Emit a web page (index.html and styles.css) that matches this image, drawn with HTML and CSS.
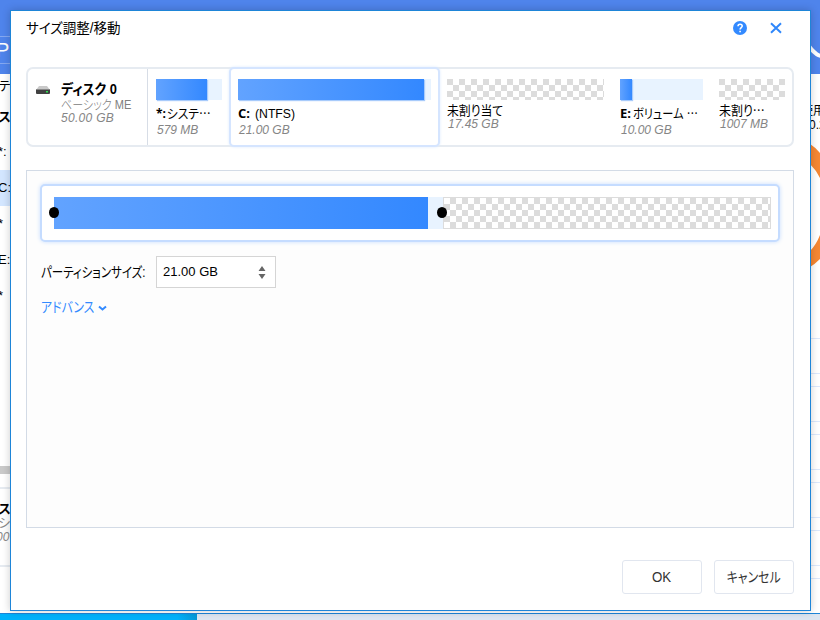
FILE: index.html
```html
<!DOCTYPE html>
<html lang="ja">
<head>
<meta charset="utf-8">
<title>サイズ調整/移動</title>
<link rel="stylesheet" href="styles.css">
</head>
<body>
<div class="app">
  <div class="app-body">
    <div class="side">
      <div class="side-head">P</div>
      <div class="row row-title">テ</div>
      <div class="row row-disk">ス</div>
      <div class="row">*:</div>
      <div class="row active">C:</div>
      <div class="row">*</div>
      <div class="row">E:</div>
      <div class="row">*</div>
      <div class="scroll"></div>
      <div class="side-card"><b>ス</b><span>シ</span><i>00</i></div>
    </div>
    <svg class="chart" width="10" height="613" viewBox="810 0 10 613">
      <path fill="#4f84eb" d="M810 0h10v74h-10z"/>
      <path d="M808 45q8 11 14 11" fill="none" stroke="#fff" stroke-width="4"/>
      <text x="801" y="115" class="chart-text">使用</text>
      <text x="809" y="129" class="chart-text">0.2</text>
      <path fill="#f58733" d="M810 144q5 3 10 9v25q-4-8-10-14zM810 251q6-6 10-16v24q-5 5-10 8z"/>
      <path stroke="#dbe8fc" d="M810 338.500h10M810 373.500h10M810 386.500h10M810 421.500h10M810 434.500h10M810 469.500h10M810 482.500h10M810 517.500h10M810 530.500h10M810 565.500h10M810 578.500h10"/>
    </svg>
  </div>
  <div class="taskbar"><div class="taskbar-on"></div></div>
</div>

<div class="dialog">
  <header class="head">
    <h1><span class="t-title">サイズ調整/移動</span></h1>
    <svg class="help" width="14" height="14" viewBox="0 0 14 14"><circle cx="7" cy="7" r="7" fill="#338aff"/><path d="M5 5.300C5 2.500 9.200 2.600 9.200 5.100 9.200 6.700 7.100 6.600 7.100 8.500M7.100 9.700v1.500" fill="none" stroke="#fff" stroke-width="1.600"/></svg>
    <svg class="close" width="12" height="12" viewBox="0 0 12 12"><path d="M1 1.300l10 9.400M11 1.300L1 10.700" stroke="#2f87fb" stroke-width="2"/></svg>
  </header>

  <section class="disk">
    <div class="disk-info">
      <svg width="14" height="9" viewBox="0 0 14 9"><path d="M3 0h8l3 4H0z" fill="#c9c9c9"/><path d="M0 3.500h14V7q0 1-1 1H1Q0 8 0 7z" fill="#414141"/><path d="M0 3.500h14" stroke="#888"/><path d="M10 5h2v1.500h-2z" fill="#31e052"/></svg>
      <div class="disk-text">
        <b><span class="t-disk">ディスク 0</span></b>
        <span class="kind"><span class="t-kind">ベーシック ME</span></span>
        <i><span class="t-cap">50.00 GB</span></i>
      </div>
    </div>
    <div class="part sys">
      <div class="bar"><div class="fill" style="width:51px"></div></div>
      <p><b>*:</b><span class="t-sys">システ⋯</span></p>
      <i>579 MB</i>
    </div>
    <div class="part current">
      <div class="bar"><div class="fill" style="width:186px"></div></div>
      <p><b>C:</b><span class="t-ntfs">(NTFS)</span></p>
      <i>21.00 GB</i>
    </div>
    <div class="part free free-a">
      <div class="bar"></div>
      <p><span class="t-free">未割り当て</span></p>
      <i>17.45 GB</i>
    </div>
    <div class="part vol">
      <div class="bar"><div class="fill" style="width:12px"></div></div>
      <p><b>E:</b><span class="t-vol">ボリューム ⋯</span></p>
      <i>10.00 GB</i>
    </div>
    <div class="part free free-b">
      <div class="bar"></div>
      <p><span class="t-rest">未割り⋯</span></p>
      <i>1007 MB</i>
    </div>
  </section>

  <section class="panel">
    <div class="slider">
      <div class="used"></div>
      <div class="unused"></div>
      <div class="space"></div>
      <span class="knob knob-start"></span>
      <span class="knob knob-end"></span>
    </div>
    <div class="field">
      <label><span class="t-label">パーティションサイズ:</span></label>
      <div class="input"><span class="t-value">21.00 GB</span>
        <svg width="8" height="13" viewBox="0 0 8 13"><path d="M4 0l3.500 5h-7zM.5 8h7L4 13z" fill="#666"/></svg>
      </div>
    </div>
    <div class="advanced"><span class="t-adv">アドバンス</span><svg width="9" height="7" viewBox="0 0 9 7"><path d="M1 1.500l3.500 3 3.500-3" fill="none" stroke="#338aff" stroke-width="2"/></svg></div>
  </section>

  <footer class="foot">
    <div class="btn"><span class="t-ok">OK</span></div>
    <div class="btn"><span class="t-cancel">キャンセル</span></div>
  </footer>
</div>
</body>
</html>
```
FILE: styles.css
```css
* { box-sizing: border-box; }
body {
  margin: 0; width: 820px; height: 620px; overflow: hidden; position: relative;
  font: 13px/16px "Liberation Sans", "Noto Sans CJK JP", sans-serif;
  color: #000; background: #fff; white-space: nowrap;
}
svg { display: block; flex: none; }
h1, p { margin: 0; font-weight: inherit; }
b { font-weight: 700; }
span[class^="t-"] { display: inline-block; transform-origin: 0 50%; font-feature-settings: "palt"; }

.app { height: 620px; display: flex; flex-direction: column; }
.app-body { height: 613px; display: flex; justify-content: space-between; background: linear-gradient(#4f84eb 74px, #fff 74px); }
.side { width: 10px; overflow: hidden; display: flex; flex-direction: column; }
.side-head { height: 28px; margin: 36px 0 10px; border: solid #84a8f1; border-width: 1px 0; color: #fff; font-size: 20px; line-height: 26px; text-indent: -4px; flex: none; }
.row { height: 36px; line-height: 36px; flex: none; text-indent: -2px; }
.row-title { height: 24px; line-height: 24px; }
.row-disk { font-weight: bold; line-height: 38px; }
.active { background: #d3e6ff; }
.scroll { margin-top: 152px; height: 8px; background: #c9c9c9; flex: none; }
.side-card { margin-top: 13px; height: 80px; border: solid #e6ebf1; border-width: 2px 0; padding-top: 13px; line-height: 14px; flex: none; display: flex; flex-direction: column; text-indent: -2px; }
.side-card span, .side-card i { color: #888; }
.side-card i { text-indent: -4px; font-size: 12px; }
.chart-text { font-size: 12px; }
.taskbar { height: 7px; border-top: 1px solid #1e85d8; background: #dce5f0; }
.taskbar-on { width: 197px; height: 6px; background: linear-gradient(90deg, #00b1fb 90%, #0798d6); }

.dialog {
  position: absolute; left: 10px; top: 10px; width: 801px; height: 601px;
  border: 1px solid #1e85d8; background: #fff; padding: 0 16px 16px 15px;
  display: flex; flex-direction: column; box-shadow: 0 0 8px rgba(0,0,0,.2);
}
.head { height: 56px; display: flex; align-items: flex-start; padding-top: 9px; }
.head h1 { font-size: 14px; flex: 1; }
.help { margin: 1px 23px 0 0; }
.close { margin: 2px 12px 0 0; }

.disk { height: 80px; border: 2px solid #e6ebf1; border-radius: 7px; display: flex; }
.disk-info { width: 120px; border-right: 1px solid #d7dde6; padding: 11px 0 0 8px; display: flex; gap: 11px; }
.disk-info > svg { margin-top: 6px; }
.disk-text { display: flex; flex-direction: column; line-height: 15px; }
.disk-text b { font-size: 14px; line-height: 18px; }
.kind { font-size: 13px; font-weight: 300; line-height: 14px; color: #808080; }
.disk-text i { line-height: 13px; font-size: 12px; }
.disk i { color: #858585; }
.part { padding: 10px 0 0 8px; height: 76px; }
.part p { line-height: 19px; margin-top: 4px; height: 19px; display: flex; }
.part p b { font: bold 13px "Open Sans", sans-serif; line-height: 19px; flex: none; width: 15px; }
.part > i { display: block; font-size: 12px; line-height: 13px; margin-top: 1px; text-indent: 1px; }
.bar { height: 21px; background: #e8f3ff; }
.fill { height: 21px; background: linear-gradient(90deg, #62a3ff, #3388ff); box-shadow: 1px 1px 1px #a8cbfb; }
.sys { width: 81px; }
.sys .bar { width: 66px; }
.sys p b { width: 11px; font-size: 12px; }
.current { width: 211px; height: 80px; margin-top: -2px; background: #fff; border: 2px solid #d5e5ff; border-radius: 5px; padding: 10px 0 0 7px; box-shadow: 0 0 3px #dceaff; }
.current .bar { width: 193px; }
.current p b { width: 17px; }
.free-a { width: 172px; padding-left: 7px; }
.free-a .bar { width: 157px; }
.vol { width: 99px; }
.vol .bar { width: 83px; }
.vol p b { width: 13px; }
.free .bar, .space { background: repeating-conic-gradient(#fff 0 25%, #dcdcdc 0 50%) 0 0 / 12px 12px; }
.free-b .bar { width: 66px; }
.free p { margin-top: 2px; height: 17px; line-height: 17px; }
.free > i { margin-top: -1px; }

.panel { margin-top: 23px; height: 358px; border: 1px solid #d3dbe6; background: #fdfdfd; padding: 13px 13px 0; }
.slider { position: relative; height: 58px; border: 2px solid #c5dcff; border-radius: 5px; background: #fff; padding: 11px 0 0 12px; display: flex; box-shadow: 0 0 4px #c8deff; }
.used { width: 374px; height: 32px; background: linear-gradient(90deg, #62a3ff, #3388ff); }
.unused { width: 15px; height: 32px; background: #e8f3ff; }
.space { width: 328px; height: 32px; border: 1px solid #dcdcdc; background: repeating-conic-gradient(#dcdcdc 0 25%, #fff 0 50%) 0 0 / 12px 12px; }
.knob { position: absolute; top: 21px; width: 10px; height: 11px; border-radius: 50%; background: #000; }
.knob-start { left: 7px; }
.knob-end { left: 395px; }
.field { display: flex; align-items: center; margin-top: 14px; height: 32px; padding-left: 1px; }
.field label { width: 115px; font-size: 14px; }
.input { width: 120px; height: 32px; border: 1px solid #d5d5d5; background: #fff; display: flex; align-items: center; justify-content: space-between; padding: 0 9px 0 6px; }
.advanced { display: flex; align-items: center; height: 16px; margin-top: 11px; padding-left: 1px; color: #338aff; font-size: 14px; }
.advanced svg { margin-top: 2px; }

.foot { margin-top: 32px; display: flex; justify-content: flex-end; gap: 12px; }
.btn { width: 80px; height: 34px; border: 1px solid #e1e6ef; border-radius: 3px; display: flex; align-items: center; justify-content: center; color: #333; font-size: 14px; }

.t-title { transform: scaleX(.965); }
.t-disk { transform: scaleX(.92); }
.t-kind { transform: scaleX(.85); }
.t-cap { letter-spacing: .3px; }
.t-sys { transform: scaleX(.9); }
.t-ntfs { transform: scaleX(.94); }
.t-free { transform: scaleX(.91); }
.t-vol { transform: scaleX(.86); }
.t-rest { transform: scaleX(.92); }
.t-adv { width: 57px; transform: scaleX(.85); }
.t-label { transform: scaleX(.82); }
span.t-cancel { transform: scaleX(.85); transform-origin: 50% 50%; }
.t-ok { transform: scaleX(.95); }
```
